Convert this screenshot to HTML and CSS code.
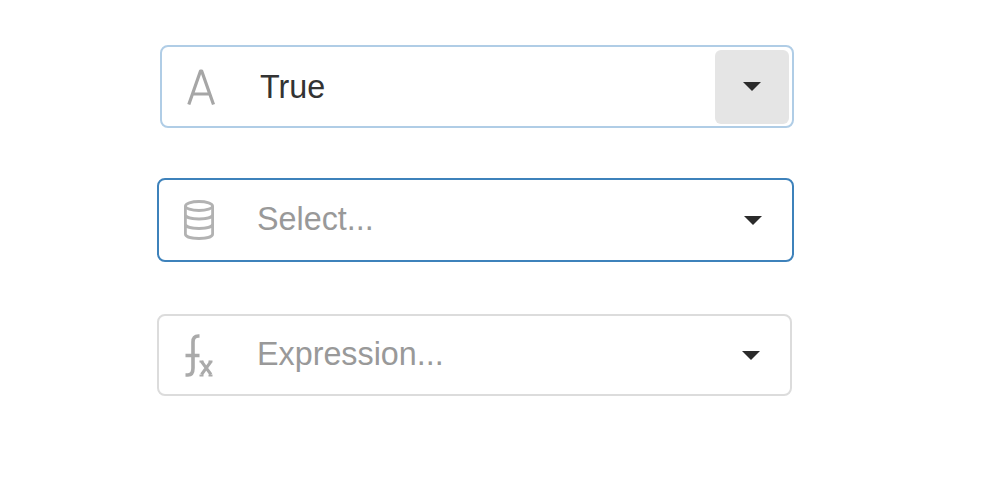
FILE: index.html
```
<!DOCTYPE html>
<html lang="en">
<head>
<meta charset="utf-8">
<title>Property selectors</title>
<link rel="stylesheet" href="styles.css">
</head>
<body>
<main class="fields">
  <div class="field field--hover">
    <svg class="icon" viewBox="0 0 40 48" fill="none" stroke="#a6a6a6" stroke-width="3.2">
      <path d="M6.800 41.500 18.500 8h1.200L31.500 41.500M10.500 31h17" stroke-linejoin="round"/>
    </svg>
    <span class="text value">True</span>
    <span class="toggle"><svg class="caret" viewBox="0 0 18 9"><path d="M0 0h18L9 9z"/></svg></span>
  </div>
  <div class="field field--focus">
    <svg class="icon" viewBox="0 0 40 48" fill="none" stroke="#b2b2b2" stroke-width="2.800">
      <ellipse cx="20" cy="10" rx="13.600" ry="4.500"/>
      <path d="M6.400 10v28c0 6 27.200 6 27.200 0V10M6.400 18.500c0 6 27.200 6 27.200 0M6.400 28c0 6 27.200 6 27.200 0"/>
    </svg>
    <span class="text placeholder">Select...</span>
    <span class="toggle"><svg class="caret" viewBox="0 0 18 9"><path d="M0 0h18L9 9z"/></svg></span>
  </div>
  <div class="field field--idle">
    <svg class="icon" viewBox="0 0 40 48" fill="none" stroke="#aaa" stroke-width="3.600">
      <path d="M20.500 5h-1c-3.500 0-5.500 2-5.500 6v26c0 4-1.500 7-5 7H6.500M6.500 24.500h14"/>
      <path d="M22.500 30.500 32 43.500M32 30.500 22.500 43.500" stroke-width="3"/>
      <path d="M20.500 30.500h4M29.500 30.500h4M20.500 44.500h4M29.500 44.500h4" stroke-width="2"/>
    </svg>
    <span class="text placeholder">Expression...</span>
    <span class="toggle"><svg class="caret" viewBox="0 0 18 9"><path d="M0 0h18L9 9z"/></svg></span>
  </div>
</main>
</body>
</html>
```
FILE: styles.css
```
* { box-sizing: border-box; }

body {
  margin: 0;
  background: #fff;
  font-family: "Liberation Sans", Arial, sans-serif;
}

.fields {
  display: flex;
  flex-direction: column;
  padding: 45px 0 0 157px;
}

.field {
  display: flex;
  align-items: center;
  width: 637px;
  height: 84px;
  padding: 0 2px 0 20px;
  border: 2px solid #dcdcdc;
  border-radius: 8px;
  background: #fff;
}

.field--hover {
  width: 634px;
  height: 83px;
  margin-left: 3px;
  margin-bottom: 50px;
  padding-right: 3px;
  border-color: #b0cde6;
}

.field--focus {
  margin-bottom: 52px;
  border-color: #3e82bb;
}

.field--idle {
  width: 635px;
  height: 82px;
}

.icon {
  flex: none;
  width: 40px;
  height: 48px;
}

.text {
  flex: 1;
  margin-left: 38px;
  color: #999;
  font-size: 32.3px;
  line-height: 40px;
}

.value {
  color: #333;
}

.placeholder {
  padding-bottom: 3px;
}

.toggle {
  display: flex;
  align-items: center;
  justify-content: center;
  width: 74px;
  height: 74px;
  border-radius: 6px;
}

.field--hover .toggle {
  background: #e5e5e5;
}

.caret {
  width: 18px;
  height: 9px;
  fill: #2b2b2b;
}
```
